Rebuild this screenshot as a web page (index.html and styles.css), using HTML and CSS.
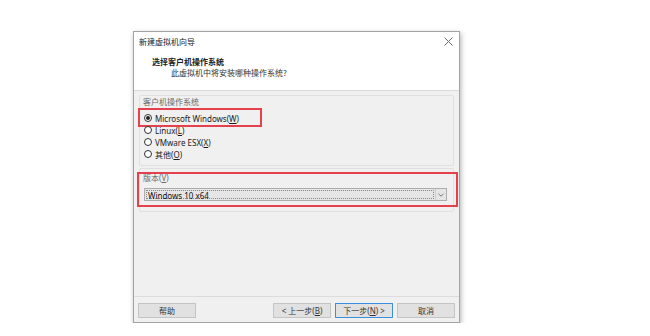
FILE: index.html
```html
<!DOCTYPE html>
<html lang="zh-CN">
<head>
    <meta charset="UTF-8">
    <title>新建虚拟机向导</title>
    <link rel="stylesheet" href="styles.css">
</head>
<body>
    <div class="dialog">
        <!-- Title + page header -->
        <div class="header">
            <div class="titlebar">
                <span class="title">新建虚拟机向导</span>
                <svg class="close" width="9" height="9" viewBox="0 0 9 9">
                    <path d="M0.5 0.5 L8.5 8.5 M8.5 0.5 L0.5 8.5" stroke="#6a6a6a" stroke-width="1" fill="none"/>
                </svg>
            </div>
            <div class="heading">选择客户机操作系统</div>
            <div class="subheading">此虚拟机中将安装哪种操作系统?</div>
        </div>

        <div class="content">
            <div class="group os-group">
                <div class="group-label">客户机操作系统</div>
                <div class="radio-list">
                    <div class="radio-row marked">
                        <span class="radio checked"></span>
                        <span>Microsoft Windows(<u>W</u>)</span>
                    </div>
                    <div class="radio-row">
                        <span class="radio"></span>
                        <span>Linux(<u>L</u>)</span>
                    </div>
                    <div class="radio-row">
                        <span class="radio"></span>
                        <span>VMware ESX(<u>X</u>)</span>
                    </div>
                    <div class="radio-row">
                        <span class="radio"></span>
                        <span>其他(<u>O</u>)</span>
                    </div>
                </div>
            </div>

            <div class="group version-group">
                <div class="group-label">版本(<u>V</u>)</div>
                <div class="combo">
                    <div class="combo-value"><span>Windows 10 x64</span></div>
                    <div class="combo-arrow">
                        <svg width="6" height="4" viewBox="0 0 6 4">
                            <path d="M0.5 0.8 L3 3.2 L5.5 0.8" stroke="#777" stroke-width="1" fill="none"/>
                        </svg>
                    </div>
                </div>
            </div>
        </div>

        <div class="footer">
            <button class="btn">帮助</button>
            <div class="spacer"></div>
            <button class="btn">&lt; 上一步(<u>B</u>)</button>
            <button class="btn primary">下一步(<u>N</u>) &gt;</button>
            <button class="btn">取消</button>
        </div>
    </div>
</body>
</html>
```

FILE: styles.css
```css
* {
    margin: 0;
    padding: 0;
    box-sizing: border-box;
}

body {
    background: #fff;
    font-family: "Noto Sans", "Noto Sans CJK SC", sans-serif;
    font-size: 8px;
    color: #1a1a1a;
}

/* Window */
.dialog {
    margin: 31px 0 0 133px;
    width: 327px;
    height: 292px;
    border: 1px solid #a3a3a3;
    background: #f0f0f0;
    box-shadow: 1px 2px 5px rgba(0, 0, 0, 0.3);
    display: flex;
    flex-direction: column;
}

/* Header */
.header {
    background: #fff;
    height: 59px;
    border-bottom: 1px solid #dadada;
}

.titlebar {
    height: 18px;
    display: flex;
    align-items: center;
    justify-content: space-between;
    padding: 0 6px 0 5px;
}

.title {
    font-family: "Noto Sans CJK SC", sans-serif;
    color: #222;
}

.heading {
    margin-top: 6px;
    padding-left: 18px;
    line-height: 11px;
    font-family: "Noto Sans CJK SC", sans-serif;
    font-weight: bold;
    color: #222;
}

.subheading {
    padding-left: 37px;
    line-height: 11px;
    font-family: "Noto Sans CJK SC", sans-serif;
    color: #333;
}

/* Body */
.content {
    flex: 1;
    padding: 4px 5px 0;
}

.group {
    position: relative;
    border: 1px solid #e0e0e0;
    border-radius: 2px;
    padding: 0 3px;
}

.group-label {
    line-height: 11px;
    color: #6a6a6a;
}

.os-group {
    height: 71px;
}

.radio-list {
    margin-top: 5px;
}

.radio-row {
    position: relative;
    height: 12px;
    display: flex;
    align-items: center;
    gap: 3px;
    padding-left: 1px;
    color: #1a1a1a;
}

.radio {
    width: 8px;
    height: 8px;
    border: 1px solid #333;
    border-radius: 50%;
    background: #fff;
    display: flex;
    align-items: center;
    justify-content: center;
}

.radio.checked::before {
    content: "";
    width: 4px;
    height: 4px;
    border-radius: 50%;
    background: #222;
}

/* red highlight boxes */
.marked::after {
    content: "";
    position: absolute;
    left: -5px;
    top: -4px;
    width: 120px;
    height: 15px;
    border: 2px solid #e5414d;
}

.version-group {
    margin-top: 2px;
    height: 44px;
    padding-top: 3px;
}

.version-group::after {
    content: "";
    position: absolute;
    left: -3px;
    top: 3px;
    width: 317px;
    height: 31px;
    border: 2px solid #e5414d;
}

.combo {
    margin-top: 5px;
    margin-left: 1px;
    width: 303px;
    height: 13px;
    display: flex;
    background: #e5e5e5;
    border: 1px solid #adadad;
}

.combo-value {
    flex: 1;
    padding: 1px;
}

.combo-value span {
    display: block;
    height: 100%;
    border: 1px dotted #8a8a8a;
    line-height: 9px;
    padding-left: 1px;
    color: #111;
}

.combo-arrow {
    width: 11px;
    border-left: 1px solid #cfcfcf;
    display: flex;
    align-items: center;
    justify-content: center;
}

/* Footer */
.footer {
    border-top: 1px solid #dcdcdc;
    padding: 6px 4px 4px;
    display: flex;
    gap: 4px;
}

.spacer {
    flex: 1;
}

.btn {
    width: 58px;
    height: 15px;
    background: #e1e1e1;
    border: 1px solid #c4c4c4;
    font-family: "Noto Sans", "Noto Sans CJK SC", sans-serif;
    font-size: 8px;
    color: #333;
}

.btn.primary {
    border-color: #3c8ee0;
}
```
